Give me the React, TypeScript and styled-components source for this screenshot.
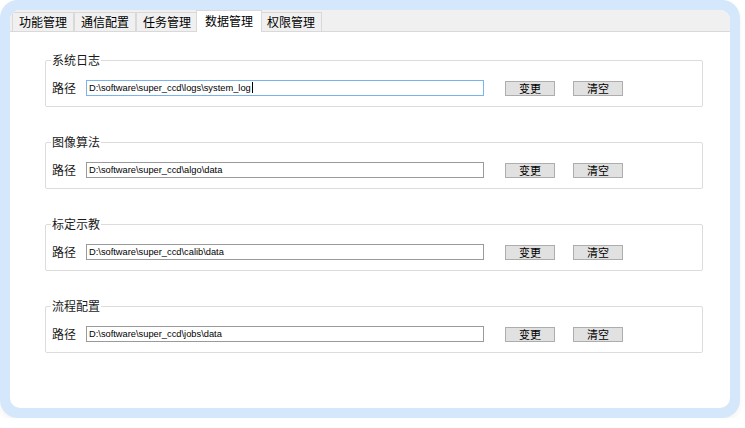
import * as React from 'react';
import styled, { createGlobalStyle } from 'styled-components';

const GlobalStyle = createGlobalStyle`
html, body {
  margin: 0;
  padding: 0;
  background: #ffffff;
}
body {
  font-family: "Noto Sans CJK SC", "Noto Sans", sans-serif;
  color: #000;
}
`

const tabs = ['功能管理', '通信配置', '任务管理', '数据管理', '权限管理'];

const groups = [
    { title: '系统日志', path: 'D:\\software\\super_ccd\\logs\\system_log', focused: true },
    { title: '图像算法', path: 'D:\\software\\super_ccd\\algo\\data', focused: false },
    { title: '标定示教', path: 'D:\\software\\super_ccd\\calib\\data', focused: false },
    { title: '流程配置', path: 'D:\\software\\super_ccd\\jobs\\data', focused: false },
];

const PathGroup = (props: { title: string, path: string, focused: boolean }) => {
    return <StyledGroup>
        <StyledLegend>{props.title}</StyledLegend>
        <StyledRow>
            <StyledLabel>路径</StyledLabel>
            <StyledPath $focused={props.focused}>
                {props.path}
                {props.focused && <StyledCaret />}
            </StyledPath>
            <StyledButton>变更</StyledButton>
            <StyledButton>清空</StyledButton>
        </StyledRow>
    </StyledGroup>
}

const App = () => {
    const [active, setActive] = React.useState(3);

    return <>
        <GlobalStyle />
        <StyledFrame>
            <StyledPanel>
                <StyledTabBar>
                    {tabs.map((t, i) => <StyledTab key={t} $active={i === active} onClick={() => setActive(i)}>{t}</StyledTab>)}
                </StyledTabBar>
                <StyledContent>
                    {groups.map(g => <PathGroup key={g.title} title={g.title} path={g.path} focused={g.focused} />)}
                </StyledContent>
            </StyledPanel>
        </StyledFrame>
    </>
}

const StyledFrame = styled.div`
box-sizing: border-box;
width: 740px;
height: 418px;
padding: 10px;
background: #d5e7fb;
border-radius: 18px;
box-shadow: 0 3px 6px rgba(0,0,0,0.05);
`

const StyledPanel = styled.div`
height: 100%;
background: #ffffff;
border-radius: 10px;
overflow: hidden;
display: flex;
flex-direction: column;
`

const StyledTabBar = styled.div`
box-sizing: border-box;
height: 22px;
display: flex;
align-items: flex-end;
padding-left: 2px;
background: #f0f0f0;
border-bottom: 1px solid #d9d9d9;
`

const StyledTab = styled.div<{ $active: boolean }>`
box-sizing: border-box;
height: ${p => p.$active ? '22px' : '19px'};
margin: ${p => p.$active ? '0 -2px -1px -2px' : '0 0 0 0'};
padding: ${p => p.$active ? '0 8px' : '0 6px'};
position: relative;
z-index: ${p => p.$active ? 1 : 0};
background: ${p => p.$active ? '#ffffff' : '#f0f0f0'};
border: 1px solid #d9d9d9;
border-bottom: ${p => p.$active ? 'none' : '0'};
font-size: 12px;
line-height: ${p => p.$active ? '19px' : '17px'};
color: #000;
cursor: default;
white-space: nowrap;
& + & {
  border-left: ${p => p.$active ? '1px solid #d9d9d9' : 'none'};
}
`

const StyledContent = styled.div`
flex: 1;
display: flex;
flex-direction: column;
gap: 27px;
padding: 20px 27px 0 35px;
`

const StyledGroup = styled.fieldset`
margin: 0;
padding: 0 0 10px 0;
border: 1px solid #dcdcdc;
border-radius: 2px;
min-width: 0;
`

const StyledLegend = styled.legend`
margin-left: 5px;
padding: 0 1px;
font-size: 12px;
line-height: 16px;
color: #1a1a1a;
`

const StyledRow = styled.div`
display: flex;
align-items: center;
padding: 12px 0 0 6px;
`

const StyledLabel = styled.span`
width: 34px;
font-size: 12px;
line-height: 16px;
color: #1a1a1a;
`

const StyledPath = styled.div<{ $focused: boolean }>`
box-sizing: border-box;
width: 398px;
height: 16px;
padding: 0 2px;
border: 1px solid ${p => p.$focused ? '#7ab4ea' : '#9a9a9a'};
background: #ffffff;
font-family: "Liberation Sans", Arial, sans-serif;
font-size: 9.3px;
line-height: 14px;
color: #000;
white-space: nowrap;
overflow: hidden;
`

const StyledCaret = styled.span`
display: inline-block;
width: 1px;
height: 11px;
margin-left: 1px;
vertical-align: -2px;
background: #000;
`

const StyledButton = styled.div`
box-sizing: border-box;
width: 50px;
height: 15px;
margin-left: 21px;
background: #e1e1e1;
border: 1px solid #adadad;
font-size: 11px;
line-height: 13px;
text-align: center;
color: #000;
cursor: default;
& + & {
  margin-left: 18px;
}
`

export default App;
